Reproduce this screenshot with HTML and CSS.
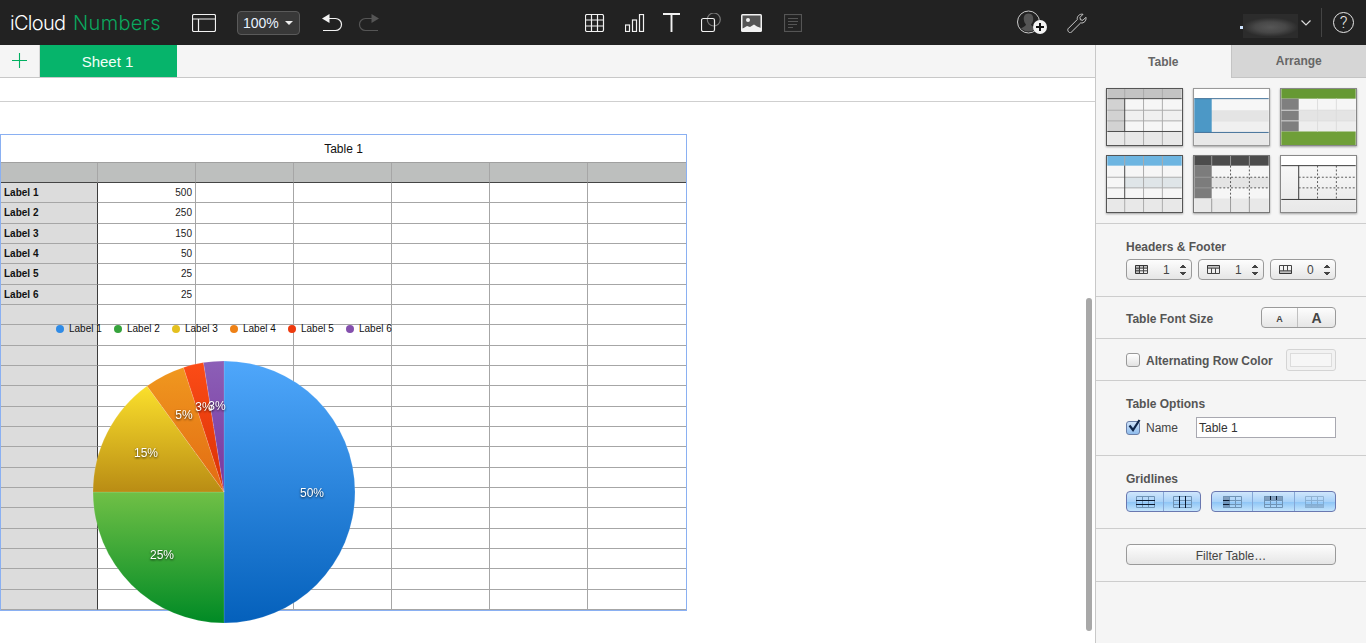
FILE: index.html
```html
<!DOCTYPE html>
<html lang="en">
<head>
<meta charset="utf-8">
<title>iCloud Numbers</title>
<link rel="stylesheet" href="styles.css">
</head>
<body>
<header class="topbar">
  <div class="logo"><span class="logo-cloud">iCloud</span> <span class="logo-app">Numbers</span></div>
  <svg class="ic i-panel" viewBox="0 0 24 18"><rect x=".5" y=".5" width="23" height="17" rx="1.5"/><path d="M.5 5h23M6.500 5v12.500"/></svg>
  <div class="zoom-btn">100%<span class="caret"></span></div>
  <svg class="ic i-undo" viewBox="0 0 21 20"><path d="M1 17.500h12.500a5.800 5.800 0 0 0 0-12H5"/><path class="fill" d="M7.500 1v9L0 5.500z"/></svg>
  <svg class="ic i-redo dim" viewBox="0 0 21 20"><path d="M20 17.500H7.500a5.800 5.800 0 0 1 0-12H16"/><path class="fill" d="M13.500 1v9L21 5.500z"/></svg>
  <svg class="ic i-table" viewBox="0 0 20 18"><rect x=".5" y=".5" width="18" height="17" rx="1.500"/><path d="M.5 6h18M.5 12h18M6.500.500v17M12.500.500v17"/></svg>
  <svg class="ic i-chart" viewBox="0 0 20 18"><rect x=".5" y="11" width="4" height="6.500"/><rect x="7.500" y="6" width="4" height="11.500"/><rect x="14.500" y=".5" width="4" height="17"/></svg>
  <svg class="ic i-text" viewBox="0 0 17 19"><path class="thick" d="M0 1h17M8.500 1v18"/></svg>
  <svg class="ic i-shape" viewBox="0 0 20 20"><circle class="grey" cx="12.800" cy="6.500" r="6.500"/><rect x=".5" y="5.500" width="13" height="13" rx="1.800"/></svg>
  <svg class="ic i-image" viewBox="0 0 21 18"><rect class="fill" width="21" height="18" rx="1.500"/><rect class="hole" x="1.500" y="1.500" width="18" height="13"/><circle class="fill" cx="7" cy="6" r="2"/><path class="fill" d="M1 15l5-3 3 1 4-2.500 3 2 4 1.500V17H1z"/></svg>
  <svg class="ic i-doc dim" viewBox="0 0 18 18"><rect x=".5" y=".5" width="17" height="17"/><path d="M4 4.500h10M4 7.500h10M4 10.500h9M4 13.500h5"/></svg>
  <svg class="ic i-collab" viewBox="0 0 30 26"><circle class="grey-thin" cx="11.500" cy="12" r="11"/><path class="grey-fill" d="M11.500 3.500c3.500 0 5 2.800 4.700 6-.2 2-1.200 4-2.200 5 0 1.500 3 2.500 5 4a11 11 0 0 1-15 0c2-1.500 5-2.500 5-4-1-1-2-3-2.200-5-.3-3.200 1.200-6 4.700-6z"/><circle class="fill" cx="23" cy="17" r="7"/><path class="plus" d="M23 13v8M19 17h8"/></svg>
  <svg class="ic i-wrench" viewBox="0 0 20 20"><path class="thin" d="M1 15.800 10.300 6.500C9.700 3.500 12.500.5 16 1.300l-3 3 .4 2.500 2.500.5 3-3c.8 3.500-2.200 6.300-5.200 5.600L4 19.500c-1.500 1-4-1.500-3-3.700z"/></svg>
  <div class="account"><span class="account-dot"></span><span class="account-blur"></span></div>
  <svg class="ic i-chev" viewBox="0 0 10 6"><path d="M.5.500 5 5 9.500.500"/></svg>
  <div class="bar-divider"></div>
  <div class="help">?</div>
</header>

<div class="body-row">
  <main class="work">
    <div class="sheetbar">
      <div class="add-sheet"><svg class="plus-ic" viewBox="0 0 15 15"><path d="M7.500 0v15M0 7.500h15"/></svg></div>
      <div class="sheet-tab">Sheet 1</div>
    </div>
    <div class="ruler"></div>
    <div class="canvas">
      <div class="table-wrap">
        <div class="table-frame">
          <div class="table-title">Table 1</div>
          <div class="grid">
            <div class="c h"></div><div class="c h"></div><div class="c h"></div><div class="c h"></div><div class="c h"></div><div class="c h"></div><div class="c h"></div>
            <div class="c l">Label 1</div><div class="c n">500</div><div class="c"></div><div class="c"></div><div class="c"></div><div class="c"></div><div class="c"></div>
            <div class="c l">Label 2</div><div class="c n">250</div><div class="c"></div><div class="c"></div><div class="c"></div><div class="c"></div><div class="c"></div>
            <div class="c l">Label 3</div><div class="c n">150</div><div class="c"></div><div class="c"></div><div class="c"></div><div class="c"></div><div class="c"></div>
            <div class="c l">Label 4</div><div class="c n">50</div><div class="c"></div><div class="c"></div><div class="c"></div><div class="c"></div><div class="c"></div>
            <div class="c l">Label 5</div><div class="c n">25</div><div class="c"></div><div class="c"></div><div class="c"></div><div class="c"></div><div class="c"></div>
            <div class="c l">Label 6</div><div class="c n">25</div><div class="c"></div><div class="c"></div><div class="c"></div><div class="c"></div><div class="c"></div>
            <div class="c l"></div><div class="c"></div><div class="c"></div><div class="c"></div><div class="c"></div><div class="c"></div><div class="c"></div>
            <div class="c l"></div><div class="c"></div><div class="c"></div><div class="c"></div><div class="c"></div><div class="c"></div><div class="c"></div>
            <div class="c l"></div><div class="c"></div><div class="c"></div><div class="c"></div><div class="c"></div><div class="c"></div><div class="c"></div>
            <div class="c l"></div><div class="c"></div><div class="c"></div><div class="c"></div><div class="c"></div><div class="c"></div><div class="c"></div>
            <div class="c l"></div><div class="c"></div><div class="c"></div><div class="c"></div><div class="c"></div><div class="c"></div><div class="c"></div>
            <div class="c l"></div><div class="c"></div><div class="c"></div><div class="c"></div><div class="c"></div><div class="c"></div><div class="c"></div>
            <div class="c l"></div><div class="c"></div><div class="c"></div><div class="c"></div><div class="c"></div><div class="c"></div><div class="c"></div>
            <div class="c l"></div><div class="c"></div><div class="c"></div><div class="c"></div><div class="c"></div><div class="c"></div><div class="c"></div>
            <div class="c l"></div><div class="c"></div><div class="c"></div><div class="c"></div><div class="c"></div><div class="c"></div><div class="c"></div>
            <div class="c l"></div><div class="c"></div><div class="c"></div><div class="c"></div><div class="c"></div><div class="c"></div><div class="c"></div>
            <div class="c l"></div><div class="c"></div><div class="c"></div><div class="c"></div><div class="c"></div><div class="c"></div><div class="c"></div>
            <div class="c l"></div><div class="c"></div><div class="c"></div><div class="c"></div><div class="c"></div><div class="c"></div><div class="c"></div>
            <div class="c l"></div><div class="c"></div><div class="c"></div><div class="c"></div><div class="c"></div><div class="c"></div><div class="c"></div>
            <div class="c l"></div><div class="c"></div><div class="c"></div><div class="c"></div><div class="c"></div><div class="c"></div><div class="c"></div>
            <div class="c l"></div><div class="c"></div><div class="c"></div><div class="c"></div><div class="c"></div><div class="c"></div><div class="c"></div>
          </div>
        </div>
        <svg class="chart" viewBox="0 134 420 500">
          <defs>
            <linearGradient id="gBlue" gradientUnits="userSpaceOnUse" x1="0" y1="361" x2="0" y2="623"><stop offset="0" stop-color="#4fa7fb"/><stop offset="1" stop-color="#0460bb"/></linearGradient>
            <linearGradient id="gGreen" gradientUnits="userSpaceOnUse" x1="0" y1="492" x2="0" y2="623"><stop offset="0" stop-color="#70c046"/><stop offset="1" stop-color="#008a25"/></linearGradient>
            <linearGradient id="gYellow" gradientUnits="userSpaceOnUse" x1="0" y1="386" x2="0" y2="492"><stop offset="0" stop-color="#fbe02c"/><stop offset="1" stop-color="#b98c14"/></linearGradient>
            <linearGradient id="gOrange" gradientUnits="userSpaceOnUse" x1="0" y1="367" x2="0" y2="492"><stop offset="0" stop-color="#f0981f"/><stop offset="1" stop-color="#e26a12"/></linearGradient>
            <linearGradient id="gRed" gradientUnits="userSpaceOnUse" x1="0" y1="362" x2="0" y2="492"><stop offset="0" stop-color="#fc4c16"/><stop offset="1" stop-color="#d93006"/></linearGradient>
            <linearGradient id="gPurple" gradientUnits="userSpaceOnUse" x1="0" y1="361" x2="0" y2="492"><stop offset="0" stop-color="#8c5fb7"/><stop offset="1" stop-color="#78379e"/></linearGradient>
          </defs>
          <g class="legend">
            <circle cx="60" cy="329" r="4" fill="#2f8be6"/><text x="69" y="332">Label 1</text>
            <circle cx="118" cy="329" r="4" fill="#36a33c"/><text x="127" y="332">Label 2</text>
            <circle cx="176" cy="329" r="4" fill="#e4c01f"/><text x="185" y="332">Label 3</text>
            <circle cx="234" cy="329" r="4" fill="#ee8116"/><text x="243" y="332">Label 4</text>
            <circle cx="292" cy="329" r="4" fill="#ee3a0e"/><text x="301" y="332">Label 5</text>
            <circle cx="350" cy="329" r="4" fill="#8450ad"/><text x="359" y="332">Label 6</text>
          </g>
          <g class="slices">
            <path fill="url(#gBlue)" d="M224 492V361A131 131 0 0 1 224 623z"/>
            <path fill="url(#gGreen)" d="M224 492V623A131 131 0 0 1 93 492z"/>
            <path fill="url(#gYellow)" d="M224 492H93A131 131 0 0 1 147 386z"/>
            <path fill="url(#gOrange)" d="M224 492 147 386A131 131 0 0 1 183.500 367.400z"/>
            <path fill="url(#gRed)" d="M224 492 183.500 367.400A131 131 0 0 1 203.500 362.600z"/>
            <path fill="url(#gPurple)" d="M224 492 203.500 362.600A131 131 0 0 1 224 361z"/>
          </g>
          <g class="pct">
            <text x="312" y="497">50%</text>
            <text x="162" y="559">25%</text>
            <text x="146" y="457">15%</text>
            <text x="184" y="419">5%</text>
            <text x="204" y="411">3%</text>
            <text x="217" y="410">3%</text>
          </g>
        </svg>
      </div>
      <div class="scrollbar"></div>
    </div>
  </main>

  <aside class="side">
    <div class="tabs"><div class="tab active">Table</div><div class="tab">Arrange</div></div>
    <section class="sec thumbs">
      <svg class="thumb t-dark" viewBox="0 0 77 58"><rect width="77" height="58" fill="#f6f6f6"/><rect width="77" height="10" fill="#c3c3c3"/><rect y="10" width="18" height="34" fill="#d2d2d2"/><rect y="22" x="18" width="59" height="11" fill="#f0f0f0"/><rect y="44" width="77" height="14" fill="#e8e8e8"/><path stroke="#aaa" d="M0 22h77M0 33h77M37.500 0v58M57 0v58M18 0v10M18 44v14"/><path stroke="#444" d="M0 10h77M0 44h77M18 10v34"/></svg>
      <svg class="thumb t-light" viewBox="0 0 77 58"><rect width="77" height="58" fill="#f7f7f7"/><rect width="77" height="10" fill="#fff"/><rect y="22" width="77" height="12" fill="#e4e4e4"/><rect y="34" width="77" height="11" fill="#f0f0f0"/><rect y="10" width="18" height="35" fill="#4c98c6"/><rect y="45" width="77" height="13" fill="#e8e8e8"/><path stroke="#3d6d96" d="M0 10h77M0 45h77"/></svg>
      <svg class="thumb t-mid" viewBox="0 0 77 58"><rect width="77" height="58" fill="#f6f6f6"/><rect y="22" width="77" height="11" fill="#e4e4e4"/><rect y="33" width="77" height="11" fill="#eee"/><rect width="77" height="10" fill="#669933"/><rect y="10" width="18" height="34" fill="#7f7f7f"/><rect y="44" width="77" height="14" fill="#6f9f38"/><path stroke="#ddd" d="M0 22h77M0 33h77M37.500 10v34M57 10v34"/></svg>
      <svg class="thumb t-dark" viewBox="0 0 77 58"><rect width="77" height="58" fill="#f6f6f6"/><rect width="77" height="10" fill="#6db5e1"/><rect x="18" y="22" width="59" height="11" fill="#dfe5e8"/><rect y="44" width="77" height="14" fill="#e8e8e8"/><path stroke="#aaa" d="M0 22h77M0 33h77M37.500 0v58M57 0v58M18 0v10M18 44v14"/><path stroke="#444" d="M0 44h77M18 10v34"/></svg>
      <svg class="thumb t-mid2" viewBox="0 0 77 58"><rect width="77" height="58" fill="#f6f6f6"/><rect x="18" y="22" width="59" height="11" fill="#e4e4e4"/><rect width="77" height="10" fill="#4c4c4c"/><rect y="10" width="18" height="34" fill="#7c7c7c"/><rect y="44" width="77" height="14" fill="#e8e8e8"/><path stroke="#999" d="M0 22h18M0 33h18M18 0v10M37.500 0v10M57 0v10M18 44v14M37.500 44v14M57 44v14"/><path stroke="#555" stroke-dasharray="2 2" d="M18 22h59M18 33h59M37.500 10v34M57 10v34"/></svg>
      <svg class="thumb t-mid" viewBox="0 0 77 58"><defs><linearGradient id="gThumb" x1="0" y1="0" x2="0" y2="1"><stop offset="0" stop-color="#fafafa"/><stop offset="1" stop-color="#e8e8e8"/></linearGradient></defs><rect width="77" height="58" fill="url(#gThumb)"/><rect width="77" height="10" fill="#fff"/><path stroke="#333" d="M0 10h77M0 45h77M18 10v35"/><path stroke="#555" stroke-dasharray="2 2" d="M18 22h59M18 33h59M37.500 10v35M57 10v35"/></svg>
    </section>

    <section class="sec sec-headers">
      <h3 class="sec-title">Headers &amp; Footer</h3>
      <div class="steppers">
        <div class="stepper"><svg class="mini" viewBox="0 0 13 9"><path d="M.5.500h12v8H.500zM.5 3.200h12M.5 5.800h12M4.500.500v8M8.500.500v8"/><path class="band" d="M0 0h13v3H0zM0 0h4.500v9H0z"/></svg><span class="num">1</span><span class="updown"></span></div>
        <div class="stepper"><svg class="mini" viewBox="0 0 13 9"><path d="M.5.500h12v8H.500zM.5 3.200h12M4.500 3.200v5.300M8.500 3.200v5.300"/><path class="band" d="M0 0h13v3H0z"/></svg><span class="num">1</span><span class="updown"></span></div>
        <div class="stepper"><svg class="mini" viewBox="0 0 13 9"><path d="M.5.500h12v8H.500zM.5 5.800h12M4.500.500v5.300M8.500.500v5.300"/><path class="band" d="M0 6h13v3H0z"/></svg><span class="num">0</span><span class="updown"></span></div>
      </div>
    </section>

    <section class="sec sec-row">
      <h3 class="sec-title">Table Font Size</h3>
      <div class="font-btns"><div class="fb small">A</div><div class="fb large">A</div></div>
    </section>

    <section class="sec sec-row">
      <div class="check-row"><span class="check"></span><span class="sec-title">Alternating Row Color</span></div>
      <div class="well"><span class="well-in"></span></div>
    </section>

    <section class="sec sec-options">
      <h3 class="sec-title">Table Options</h3>
      <div class="name-row">
        <span class="check on"><svg class="tick" viewBox="0 0 14 14"><path d="M2.500 6.500 6 11 12.500 1"/></svg></span>
        <span class="name-label">Name</span>
        <div class="name-input">Table 1</div>
      </div>
    </section>

    <section class="sec sec-grid">
      <h3 class="sec-title">Gridlines</h3>
      <div class="grid-btns">
        <div class="seg seg-a">
          <div class="sg"><svg class="gi" viewBox="0 0 19 12"><path class="soft" d="M.5.500h18v11H.500zM6.500.500v11M12.500.500v11"/><path class="hard" d="M0 4.500h19M0 8.500h19"/></svg></div>
          <div class="sg"><svg class="gi" viewBox="0 0 19 12"><path class="soft" d="M.5.500h18v11H.500zM.5 4.500h18M.5 8.500h18"/><path class="hard" d="M6.500 0v12M12.500 0v12"/></svg></div>
        </div>
        <div class="seg seg-b">
          <div class="sg"><svg class="gi" viewBox="0 0 19 12"><path class="shade" d="M0 0h6.500v12H0z"/><path class="soft" d="M.5.500h18v11H.500zM6.500.500v11M12.500.500v11M.5 4.500h18M.5 8.500h18"/><path class="hard" d="M0 4.500h6.500M0 8.500h6.500"/></svg></div>
          <div class="sg"><svg class="gi" viewBox="0 0 19 12"><path class="shade" d="M0 0h19v4H0z"/><path class="soft" d="M.5.500h18v11H.500zM6.500.500v11M12.500.500v11M.5 4.500h18M.5 8.500h18"/><path class="hard" d="M6.500 0v4M12.500 0v4"/></svg></div>
          <div class="sg"><svg class="gi faint" viewBox="0 0 19 12"><path class="shade" d="M0 8h19v4H0z"/><path class="soft" d="M.5.500h18v11H.500zM6.500.500v11M12.500.500v11M.5 4.500h18M.5 8.500h18"/></svg></div>
        </div>
      </div>
    </section>

    <section class="sec sec-filter"><div class="filter-btn">Filter Table…</div></section>
  </aside>
</div>
</body>
</html>
```
FILE: styles.css
```css
* { box-sizing: border-box; }
html, body { margin: 0; height: 643px; overflow: hidden; background: #fff; }
body { font-family: "Liberation Sans", Arial, sans-serif; }
h3 { margin: 0; }

/* top bar */
.topbar { height: 45px; background: #222; display: flex; align-items: center; padding-left: 10px; color: #fff; }
.logo { width: 182px; font-family: Inter, "Liberation Sans", sans-serif; font-weight: 300; font-size: 20px; color: #fff; white-space: nowrap; }
.logo-cloud { letter-spacing: -.7px; }
.logo-app { color: #0aa85f; margin-left: 2px; letter-spacing: .35px; }
.ic { display: block; flex: none; fill: none; stroke: #f2f2f2; stroke-width: 1.2; }
.ic .fill { fill: #f2f2f2; stroke: none; }
.ic .thick { stroke-width: 1.9; }
.ic .grey { stroke: #777; stroke-width: 1.2; }
.ic .grey-thin { stroke: #ccc; stroke-width: 1; fill: #222; }
.ic .grey-fill { fill: #555; stroke: none; }
.ic .hole { fill: #555; stroke: none; }
.ic .plus { stroke: #111; stroke-width: 2; }
.ic .thin { stroke: #ccc; stroke-width: 1; }
.ic.dim { stroke: #555; }
.ic.dim .fill { fill: #555; }
.i-panel { width: 24px; height: 18px; }
.zoom-btn { margin-left: 21px; width: 63px; height: 24px; border: 1px solid #5a5a5a; border-radius: 4px; background: #383838; font-size: 14px; display: flex; align-items: center; padding-left: 5px; color: #e8f2ff; }
.caret { margin-left: 6px; width: 0; height: 0; border-left: 4px solid transparent; border-right: 4px solid transparent; border-top: 4px solid #eee; }
.i-undo { margin-left: 22px; width: 21px; height: 20px; }
.i-redo { margin-left: 15px; width: 21px; height: 20px; }
.i-table { margin-left: 206px; width: 20px; height: 18px; }
.i-chart { margin-left: 20px; width: 20px; height: 18px; }
.i-text { margin-left: 18px; width: 17px; height: 19px; }
.i-shape { margin-left: 21px; width: 20px; height: 20px; }
.i-image { margin-left: 20px; width: 21px; height: 18px; }
.i-doc { margin-left: 22px; width: 18px; height: 18px; }
.i-collab { margin-left: 215px; width: 30px; height: 26px; }
.i-wrench { margin-left: 20px; width: 20px; height: 20px; }
.account { margin-left: 153px; width: 58px; height: 24px; margin-top: 7px; display: flex; align-items: center; }
.account-dot { width: 3px; height: 3px; margin-top: 3px; background: #cfe4ff; flex: none; }
.account-blur { display: block; flex: 1; height: 24px; background: radial-gradient(ellipse 50% 40% at 50% 55%, #565656, #484848 55%, #2c2c2c 100%); }
.i-chev { margin-left: 3px; width: 10px; height: 6px; stroke: #ddd; }
.bar-divider { margin-left: 10px; width: 1px; height: 29px; background: #444; }
.help { margin-left: 11px; width: 21px; height: 21px; border: 1px solid #e8e8e8; border-radius: 50%; font-family: Roboto, sans-serif; font-weight: 300; font-size: 17px; line-height: 19px; text-align: center; color: #e8e8e8; }

/* layout */
.body-row { display: flex; height: 598px; }
.work { flex: 1; min-width: 0; display: flex; flex-direction: column; }
.sheetbar { height: 33px; background: #f5f5f5; border-bottom: 1px solid #c8c8c8; display: flex; flex: none; }
.add-sheet { width: 40px; padding: 8px 0 0 12px; border-right: 1px solid #d8d8d8; }
.plus-ic { display: block; width: 15px; height: 15px; fill: none; stroke: #00b060; stroke-width: 1.1; }
.sheet-tab { width: 137px; height: 32px; padding-right: 2px; background: #06b46b; color: #f2fff8; font-size: 15px; display: flex; align-items: center; justify-content: center; }
.ruler { height: 24px; flex: none; border-bottom: 1px solid #cfcfcf; }
.canvas { flex: 1; position: relative; padding-top: 32px; }

/* table */
.table-wrap { position: relative; width: 687px; }
.table-frame { border: 1px solid #8ab0f2; background: #fff; }
.table-title { height: 28px; border-bottom: 1px solid #a0a0a0; font-size: 12px; line-height: 28px; text-align: center; color: #111; }
.grid { display: grid; grid-template-columns: 97px repeat(6, 98px); grid-template-rows: 20px repeat(21, 20.33px); }
.c { border-right: 1px solid #a6a6a6; border-bottom: 1px solid #a6a6a6; font-size: 10px; line-height: 19px; color: #222; }
.c:nth-child(7n) { border-right: 0; }
.c:nth-child(7n+1) { border-right-color: #3c3c3c; }
.c.h { background: #bdbfbe; border-bottom-color: #444; border-right-color: #a6a6a6; }
.c.l { background: #dcdcdc; font-weight: 700; padding-left: 3px; color: #111; }
.c.n { text-align: right; padding-right: 3px; }
.chart { position: absolute; left: 0; top: 0; width: 420px; height: 500px; overflow: visible; }
.legend text { font-size: 10px; fill: #111; font-family: "Liberation Sans", Arial, sans-serif; }
.slices path { stroke: rgba(255,255,255,.25); stroke-width: .5; }
.pct { filter: drop-shadow(0 1px 1px rgba(0,0,0,.75)); }
.pct text { font-size: 12px; fill: #fff; text-anchor: middle; font-family: "Liberation Sans", Arial, sans-serif; }
.scrollbar { position: absolute; right: 3px; top: 196px; width: 6px; height: 333px; border-radius: 3px; background: #a8a8a8; }

/* sidebar */
.side { width: 271px; flex: none; background: #f5f5f5; border-left: 1px solid #c8c8c8; }
.tabs { display: flex; height: 33px; }
.tab { flex: 1; font-size: 12px; font-weight: 700; color: #666; display: flex; align-items: center; justify-content: center; background: #d6d6d6; border-bottom: 1px solid #c4c4c4; border-left: 1px solid #c4c4c4; }
.tab.active { background: #f5f5f5; border: 0; color: #666; }
.sec { border-bottom: 1px solid #cdcdcd; padding: 0 30px; }
.sec-title { font-size: 12px; font-weight: 700; line-height: 14px; color: #555; }
.thumbs { display: grid; grid-template-columns: repeat(3, 77px); grid-template-rows: 58px 58px; gap: 9px 10px; padding: 10px 0 10px 10px; height: 146px; }
.thumb { display: block; width: 77px; height: 58px; border: 1px solid #555; box-shadow: 0 1px 2px rgba(0,0,0,.35); fill: none; }
.t-light { border-color: #999; }
.t-mid { border-color: #888; }
.t-mid2 { border-color: #777; }
.sec-headers { padding-top: 16px; padding-bottom: 16px; }
.steppers { display: flex; gap: 6px; margin-top: 5px; }
.stepper { width: 66px; height: 21px; border: 1px solid #9a9a9a; border-radius: 4px; background: linear-gradient(#fdfdfd, #e6e6e6); display: flex; align-items: center; padding-left: 8px; position: relative; }
.mini { width: 13px; height: 9px; fill: none; stroke: #444; stroke-width: 1; }
.mini .band { stroke: none; fill: rgba(0,0,0,.2); }
.num { margin-left: 15px; width: 8px; font-size: 12px; line-height: 21px; padding-top: 1px; color: #444; }
.updown { margin-left: 9px; width: 6px; height: 12px; background:
  linear-gradient(to top left, #444 50%, transparent 50%) 0 0/3px 4px no-repeat,
  linear-gradient(to top right, #444 50%, transparent 50%) 3px 0/3px 4px no-repeat,
  linear-gradient(to bottom left, #444 50%, transparent 50%) 0 8px/3px 4px no-repeat,
  linear-gradient(to bottom right, #444 50%, transparent 50%) 3px 8px/3px 4px no-repeat; }
.sec-row { height: 42px; display: flex; align-items: center; justify-content: space-between; }
.sec-row .sec-title { padding-top: 2px; line-height: 14px; }
.font-btns { width: 75px; height: 21px; display: flex; border: 1px solid #9a9a9a; border-radius: 4px; background: linear-gradient(#fdfdfd, #e6e6e6); }
.fb { font-weight: 700; color: #444; display: flex; align-items: center; justify-content: center; }
.fb.small { width: 36px; font-size: 9px; padding-top: 2px; border-right: 1px solid #c0c0c0; }
.fb.large { flex: 1; font-size: 14px; }
.check-row { display: flex; align-items: center; gap: 6px; }
.check { width: 14px; height: 14px; border: 1px solid #999; border-radius: 3px; background: linear-gradient(#fff, #e2e2e2); display: block; flex: none; position: relative; }
.check.on { background: linear-gradient(#cfe3fa, #8fbcec); border-color: #6a7fa8; }
.tick { position: absolute; left: 0; top: -3px; width: 14px; height: 14px; fill: none; stroke: #10264a; stroke-width: 2.2; overflow: visible; }
.well { width: 50px; height: 22px; border: 1px solid #d4d4d4; border-radius: 3px; background: #f2f2f2; padding: 3px 3px; }
.well-in { display: block; height: 100%; border: 1px solid #dcdcdc; background: #f6f6f6; }
.sec-options { padding-top: 16px; padding-bottom: 17px; }
.name-row { display: flex; align-items: center; margin-top: 6px; height: 21px; }
.name-label { margin-left: 6px; font-size: 12px; padding-top: 1px; color: #444; width: 50px; }
.name-input { flex: 1; height: 21px; border: 1px solid #a8a8b0; background: #fff; font-size: 12px; line-height: 21px; padding-left: 2px; color: #333; }
.sec-grid { padding-top: 16px; padding-bottom: 16px; }
.grid-btns { display: flex; gap: 10px; margin-top: 5px; }
.seg { height: 21px; display: flex; border: 1px solid #6a78b0; border-radius: 4px; background: linear-gradient(#cfe6fc, #a9d2f8 50%, #8cc4f6 52%, #c4e4fc); }
.seg-a { width: 75px; }
.seg-b { width: 125px; }
.sg { flex: 1; display: flex; align-items: center; justify-content: center; border-right: 1px solid #86a8d6; }
.sg:last-child { border-right: 0; }
.gi { width: 19px; height: 12px; fill: none; }
.gi .soft { stroke: #6f93b5; stroke-width: 1; }
.gi .hard { stroke: #0b1a30; stroke-width: 1; }
.gi .shade { fill: rgba(50,70,100,.4); }
.gi.faint { opacity: .55; }
.sec-filter { padding-top: 15px; padding-bottom: 16px; }
.filter-btn { height: 21px; border: 1px solid #9a9a9a; border-radius: 4px; background: linear-gradient(#fdfdfd, #e6e6e6); font-size: 12px; line-height: 22px; text-align: center; color: #444; }
```
